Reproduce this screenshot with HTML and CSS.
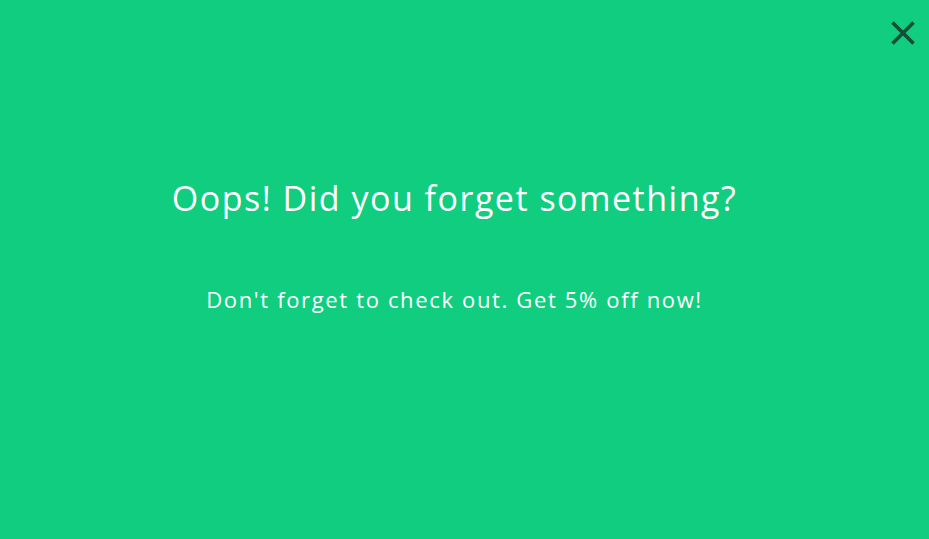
FILE: index.html
```html
<!DOCTYPE html>
<html lang="en">
<head>
    <meta charset="UTF-8">
    <title>Exit offer</title>
    <link rel="stylesheet" href="styles.css">
</head>
<body>
    <div class="popup">
        <button class="close" aria-label="Close">
            <svg width="26" height="26" viewBox="0 0 26 26">
                <path d="M2.5 2.5 L23.5 23.5 M23.5 2.5 L2.5 23.5" stroke="#184c36" stroke-width="3.6"/>
            </svg>
        </button>
        <div class="content">
            <h1>Oops! Did you forget something?</h1>
            <p>Don't forget to check out. Get 5% off now!</p>
        </div>
    </div>
</body>
</html>
```

FILE: styles.css
```css
html, body {
    margin: 0;
    height: 100%;
}
body {
    font-family: "Open Sans", Arial, sans-serif;
    background-color: #10cd7f;
    color: #fff;
}
.popup {
    height: 100%;
    position: relative;
}
.close {
    position: absolute;
    top: 20px;
    right: 13px;
    background: none;
    border: none;
    padding: 0;
    cursor: pointer;
}
.close svg {
    display: block;
}
.content {
    padding: 170px 20px 0 0;
    text-align: center;
}
h1 {
    font-size: 34px;
    font-weight: 400;
    letter-spacing: 1.5px;
    margin: 0;
    line-height: 56px;
}
p {
    font-size: 22px;
    letter-spacing: 1.65px;
    margin: 58px 0 0;
    line-height: 30px;
}
```
